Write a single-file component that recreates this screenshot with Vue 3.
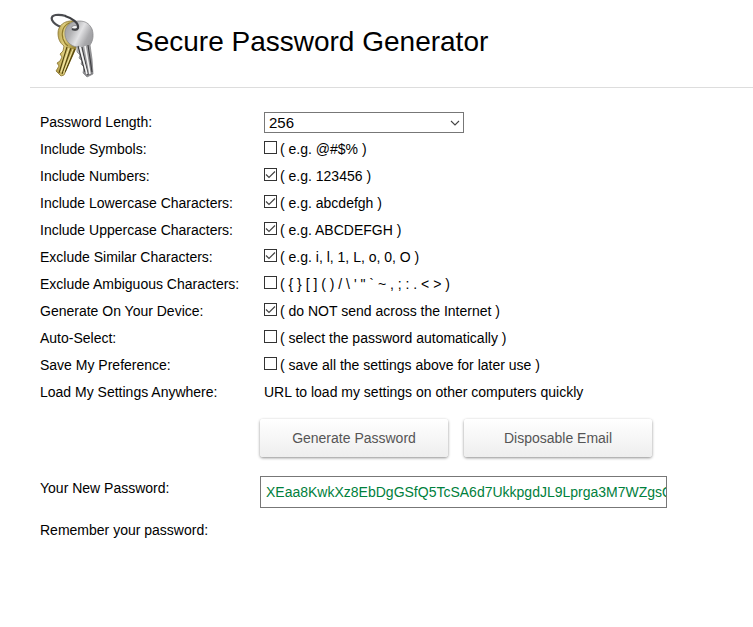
<script setup>
import { ref, reactive } from 'vue'

const lengths = [8, 12, 16, 32, 64, 128, 256, 512]
const length = ref(256)

const options = reactive([
  { id: 'symbols', label: 'Include Symbols:', hint: '( e.g. @#$% )', on: false },
  { id: 'numbers', label: 'Include Numbers:', hint: '( e.g. 123456 )', on: true },
  { id: 'lowercase', label: 'Include Lowercase Characters:', hint: '( e.g. abcdefgh )', on: true },
  { id: 'uppercase', label: 'Include Uppercase Characters:', hint: '( e.g. ABCDEFGH )', on: true },
  { id: 'similar', label: 'Exclude Similar Characters:', hint: '( e.g. i, l, 1, L, o, 0, O )', on: true },
  { id: 'ambiguous', label: 'Exclude Ambiguous Characters:', hint: '( { } [ ] ( ) / \\ \' " ` ~ , ; : . < > )', on: false },
  { id: 'device', label: 'Generate On Your Device:', hint: '( do NOT send across the Internet )', on: true },
  { id: 'autoselect', label: 'Auto-Select:', hint: '( select the password automatically )', on: false },
  { id: 'save', label: 'Save My Preference:', hint: '( save all the settings above for later use )', on: false },
])

const password = ref('XEaa8KwkXz8EbDgGSfQ5TcSA6d7UkkpgdJL9Lprga3M7WZgsQ')
const output = ref(null)

const isOn = id => options.find(o => o.id === id).on

function generate() {
  let chars = ''
  if (isOn('symbols')) chars += '@#$%&*+-=?!^_{}[]()/\\\'"`~,;:.<>'
  if (isOn('numbers')) chars += '0123456789'
  if (isOn('lowercase')) chars += 'abcdefghijklmnopqrstuvwxyz'
  if (isOn('uppercase')) chars += 'ABCDEFGHIJKLMNOPQRSTUVWXYZ'
  if (isOn('similar')) chars = chars.replace(/[il1Lo0O]/g, '')
  if (isOn('ambiguous')) chars = chars.replace(/[{}[\]()/\\'"`~,;:.<>]/g, '')
  if (!chars) return
  const random = crypto.getRandomValues(new Uint32Array(length.value))
  password.value = Array.from(random, n => chars[n % chars.length]).join('')
  if (isOn('autoselect')) output.value.select()
}
</script>

<template>
  <main class="page">
    <header class="header">
      <svg class="logo" viewBox="0 0 50 68" aria-hidden="true">
        <defs>
          <linearGradient id="silver" x1="0" y1="0" x2="1" y2="1">
            <stop offset="0" stop-color="#9a9a9c" />
            <stop offset=".22" stop-color="#b4b4b6" />
            <stop offset=".38" stop-color="#e2e2e4" />
            <stop offset=".55" stop-color="#a9a9ac" />
            <stop offset="1" stop-color="#77777a" />
          </linearGradient>
          <linearGradient id="gold" x1="0" y1="0" x2="1" y2="0">
            <stop offset="0" stop-color="#b09a45" />
            <stop offset=".4" stop-color="#e0cf80" />
            <stop offset="1" stop-color="#8f7a28" />
          </linearGradient>
        </defs>
        <!-- back half of the ring -->
        <path d="M24 17 C16 18 5 14 2 8 C0 2 9 2 16 4" fill="none" stroke="#4c4d51" stroke-width="2.2" />
        <!-- gold key -->
        <path d="M24 9 C14 8 8 14 8 21 C8 27 10 31 14 34 L13 39 L10 42 L12 45 L10 49 L7 51 L9 54 L6 59 L11 64 L14 63 L26 36 Z" fill="url(#gold)" stroke="#8a7530" stroke-width=".8" />
        <path d="M20 11 C13 13 11 20 13 27 C14 30 15 32 18 34" fill="none" stroke="#8f7a28" stroke-width="1.2" />
        <path d="M17 35 L9 61 M21 36 L12 62 M25 37 L15 60" stroke="#54450d" stroke-width="1.1" />
        <path d="M19 36 L11 60 M23 37 L14 60" stroke="#f3e7a5" stroke-width="1" />
        <!-- silver key -->
        <path d="M29 9 C20 9 14 15 15 23 C16 30 21 34 27 35 L27 40 L30 43 L29 46 L32 49 L31 52 L34 55 L33 61 L37 65 L43 62 L42 47 L40 33 C43 29 44 23 42 17 C39 11 35 9 29 9 Z" fill="url(#silver)" stroke="#8a8a8d" stroke-width=".8" />
        <path d="M28 34 L35 60 M32 35 L38 63 M38 33 L42 60" stroke="#3f3f42" stroke-width="1.1" />
        <path d="M30 35 L37 62 M35 34 L40 62" stroke="#f5f5f5" stroke-width="1.6" />
        <ellipse cx="25" cy="16" rx="3.500" ry="2.500" fill="#f4f4f4" stroke="#77777a" stroke-width=".7" />
        <!-- front of the ring, through the hole -->
        <path d="M15 4 C22 6 29 11 28 16 C27 18 25 18 22 17" fill="none" stroke="#3f4044" stroke-width="2.2" />
      </svg>
      <h1 class="title">Secure Password Generator</h1>
    </header>

    <form class="form" @submit.prevent="generate">
      <div class="row">
        <label class="label" for="length">Password Length:</label>
        <div class="select-wrap">
          <select id="length" v-model="length" class="select">
            <option v-for="n in lengths" :key="n" :value="n">{{ n }}</option>
          </select>
          <svg class="chevron" viewBox="0 0 10 6" aria-hidden="true">
            <path d="M1 1 L5 5 L9 1" fill="none" stroke="#444" stroke-width="1.1" />
          </svg>
        </div>
      </div>

      <div v-for="o in options" :key="o.id" class="row">
        <label class="label" :for="o.id">{{ o.label }}</label>
        <div class="option">
          <span class="check">
            <input :id="o.id" v-model="o.on" class="box" type="checkbox">
            <svg v-if="o.on" class="tick" viewBox="0 0 13 13" aria-hidden="true">
              <path d="M2 6.500 L5 9.500 L11 3.500" fill="none" stroke="#444" stroke-width="1.2" />
            </svg>
          </span>
          <label :for="o.id">{{ o.hint }}</label>
        </div>
      </div>

      <div class="row">
        <span class="label">Load My Settings Anywhere:</span>
        <a class="link" href="#settings">URL to load my settings on other computers quickly</a>
      </div>

      <div class="buttons">
        <button class="btn" type="submit">Generate Password</button>
        <button class="btn" type="button">Disposable Email</button>
      </div>

      <div class="result">
        <label class="result-label" for="password">Your New Password:</label>
        <input id="password" ref="output" v-model="password" class="password" type="text" readonly>
      </div>

      <div class="row">
        <span class="label">Remember your password:</span>
      </div>
    </form>
  </main>
</template>

<style>
body { margin:0; background:#fff; }
</style>

<style scoped>
.page { padding-left:30px; font-family:"Liberation Sans", Arial, sans-serif; font-size:14px; color:#000; overflow:hidden; }
.header { display:flex; align-items:flex-start; box-sizing:border-box; height:88px; padding:12px 0 0 20px; border-bottom:1px solid #ddd; }
.logo { width:50px; height:68px; flex-shrink:0; }
.title { margin:13px 0 0 35px; font-size:28px; line-height:34px; font-weight:400; white-space:nowrap; }

.form { padding:20px 10px 0; }
.row { display:flex; align-items:center; height:27px; white-space:nowrap; }
.label { width:224px; flex-shrink:0; }
.option { display:flex; align-items:center; gap:3px; }

.select-wrap { position:relative; width:200px; margin-top:2px; }
.select { display:block; width:100%; height:21px; box-sizing:border-box; padding:0 4px; border:1px solid #777; border-radius:0; background:#fff; color:#000; font:15px "Liberation Sans", Arial, sans-serif; appearance:none; outline:none; }
.chevron { position:absolute; right:4px; top:8px; width:10px; height:6px; pointer-events:none; }

.check { position:relative; width:13px; height:13px; margin-bottom:2px; }
.box { display:block; width:13px; height:13px; margin:0; box-sizing:border-box; border:1px solid #333; border-radius:0; background:#fff; appearance:none; }
.tick { position:absolute; inset:0; width:13px; height:13px; pointer-events:none; }
.link { color:#000; text-decoration:none; }

.buttons { display:flex; gap:16px; padding:14px 0 0 220px; }
.btn { width:188px; height:38px; flex-shrink:0; padding:0; border:0; border-radius:3px; background:linear-gradient(#fff, #eee); box-shadow:0 1px 3px rgba(0,0,0,.45); color:#555; font:14px "Liberation Sans", Arial, sans-serif; cursor:pointer; }

.result { display:flex; align-items:flex-start; padding:19px 0 8px; white-space:nowrap; }
.result-label { width:220px; flex-shrink:0; line-height:24px; }
.password { width:407px; height:32px; box-sizing:border-box; padding:0 0 0 5px; border:1px solid #777; border-radius:0; background:#fff; color:#00803c; font:14px "Liberation Sans", Arial, sans-serif; outline:none; }
</style>
